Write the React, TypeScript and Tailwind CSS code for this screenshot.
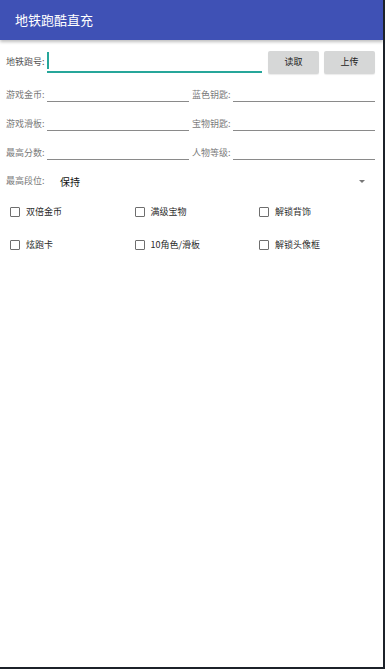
import React from 'react';

const font = { fontFamily: '"Noto Sans CJK SC", Roboto, sans-serif' };

const Field: React.FC<{ label: string }> = ({ label }) => (
    <>
        <span className="w-[41px] shrink-0 text-[9px] leading-[14px] text-[#7a7a7a] whitespace-nowrap">{label}</span>
        <div className="w-[142px] h-px bg-[#8a8a8a]" />
    </>
);

const Check: React.FC<{ label: string }> = ({ label }) => (
    <div className="flex items-center h-[33px] pl-[10px]">
        <span className="w-[10px] h-[10px] border-[1.5px] border-[#6e6e6e] rounded-[1px] box-border" />
        <span className="ml-[6px] text-[9px] text-[#2a2a2a] whitespace-nowrap">{label}</span>
    </div>
);

const App: React.FC = () => {
    return (
        <div className="w-[385px] h-[669px] bg-white border-r-2 border-b-2 border-[#1c2129] box-border overflow-hidden" style={font}>
            <div className="h-[40px] bg-[#3f51b5] flex items-center px-[15px] text-white text-[13px] shadow-[0_2px_3px_rgba(0,0,0,0.25)] relative">
                地铁跑酷直充
            </div>

            <div className="flex items-center h-[24px] mt-[10px] pl-[6px]">
                <span className="w-[41px] text-[9px] text-[#555] whitespace-nowrap">地铁跑号:</span>
                <div className="w-[215px] h-[22px] border-b-2 border-[#26a69a] flex items-start">
                    <span className="w-[2px] h-[17px] mt-[1px] bg-[#26a69a]" />
                </div>
                <button className="ml-[6px] w-[51px] h-[23px] bg-[#d6d7d7] rounded-[2px] text-[9px] text-[#222] shadow-[0_1px_1px_rgba(0,0,0,0.08)]">读取</button>
                <button className="ml-[5px] w-[51px] h-[23px] bg-[#d6d7d7] rounded-[2px] text-[9px] text-[#222] shadow-[0_1px_1px_rgba(0,0,0,0.08)]">上传</button>
            </div>

            <div className="flex items-end h-[28px] pl-[6px]">
                <Field label="游戏金币:" />
                <div className="w-[3px]" />
                <Field label="蓝色钥匙:" />
            </div>
            <div className="flex items-end h-[29px] pl-[6px]">
                <Field label="游戏滑板:" />
                <div className="w-[3px]" />
                <Field label="宝物钥匙:" />
            </div>
            <div className="flex items-end h-[29px] pl-[6px]">
                <Field label="最高分数:" />
                <div className="w-[3px]" />
                <Field label="人物等级:" />
            </div>

            <div className="flex items-center h-[35px] pt-[7px] pl-[6px] pr-[18px]">
                <span className="w-[41px] text-[9px] text-[#7a7a7a] whitespace-nowrap">最高段位:</span>
                <span className="ml-[13px] text-[10px] text-[#111]">保持</span>
                <span className="ml-auto w-0 h-0 border-l-[3px] border-r-[3px] border-t-[3px] border-l-transparent border-r-transparent border-t-[#777]" />
            </div>

            <div className="grid grid-cols-[124.5px_124.5px_124.5px]">
                <Check label="双倍金币" />
                <Check label="满级宝物" />
                <Check label="解锁背饰" />
                <Check label="炫跑卡" />
                <Check label="10角色/滑板" />
                <Check label="解锁头像框" />
            </div>
        </div>
    );
};

export default App;
